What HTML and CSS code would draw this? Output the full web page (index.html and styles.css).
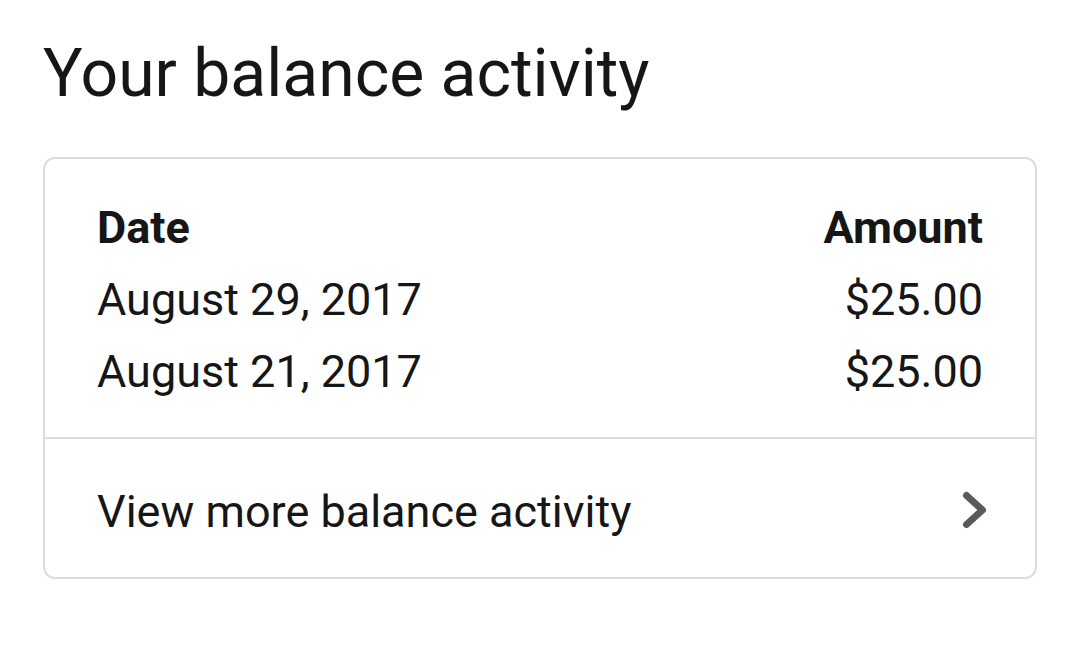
FILE: index.html
```html
<!DOCTYPE html>
<html lang="en">
<head>
    <meta charset="UTF-8">
    <meta name="viewport" content="width=device-width, initial-scale=1.0">
    <title>Your balance activity</title>
    <link rel="stylesheet" href="styles.css">
</head>
<body>
    <div class="page">
        <h1>Your balance activity</h1>

        <div class="card">
            <div class="activity">
                <div class="row head">
                    <span>Date</span>
                    <span>Amount</span>
                </div>
                <div class="row">
                    <span>August 29, 2017</span>
                    <span>$25.00</span>
                </div>
                <div class="row">
                    <span>August 21, 2017</span>
                    <span>$25.00</span>
                </div>
            </div>

            <a class="more" href="#">
                <span>View more balance activity</span>
                <svg class="chevron" viewBox="0 0 30 40" width="30" height="40">
                    <path d="M5.5 5.5L21.5 20 5.5 34.5"/>
                </svg>
            </a>
        </div>
    </div>
</body>
</html>
```

FILE: styles.css
```css
body {
    margin: 0;
    background: #fff;
    color: #161616;
    font-family: Roboto, "Noto Sans", sans-serif;
}
.page {
    padding: 36px 41px 0 43px;
}
h1 {
    margin: 0 0 45px;
    font-size: 66px;
    font-weight: 400;
    line-height: 76px;
}
.card {
    border: 2px solid #dddddd;
    border-radius: 12px;
}
.activity {
    padding: 33px 52px 29px;
    border-bottom: 2px solid #dddddd;
}
.row {
    display: flex;
    justify-content: space-between;
    font-size: 45px;
    line-height: 72px;
}
.head {
    font-weight: 700;
}
.more {
    display: flex;
    align-items: center;
    justify-content: space-between;
    height: 138px;
    padding: 0 44px 0 52px;
    color: #161616;
    text-decoration: none;
    font-size: 45px;
}
.more span {
    padding-top: 6px;
}
.chevron {
    fill: none;
    stroke: #5a5a5a;
    stroke-width: 7;
    stroke-linecap: round;
    stroke-linejoin: round;
    margin-top: 4px;
}
```
